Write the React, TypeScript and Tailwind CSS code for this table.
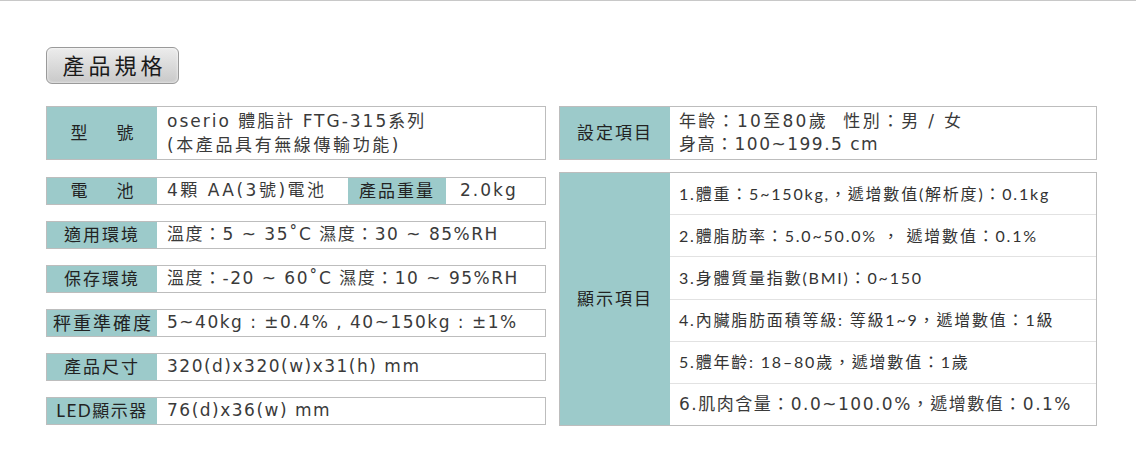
import React from "react";

const font = {
  fontFamily: '"Lato", "Noto Sans CJK TC", sans-serif',
};

const wide = {
  fontFamily: '"DejaVu Sans", "Noto Sans CJK TC", sans-serif',
};

interface RowProps {
  label: React.ReactNode;
  children: React.ReactNode;
  labelClass?: string;
}

const Row: React.FC<RowProps> = ({ label, children, labelClass }) => {
  return (
    <div className="flex h-[28px] border border-[#bdbdbd] bg-white">
      <div
        className={
          "w-[110px] shrink-0 bg-[#9ccaca] flex items-center justify-center text-[#222] " +
          (labelClass ?? "text-[17px] tracking-[2px]")
        }
      >
        {label}
      </div>
      <div
        className="flex-1 flex items-center pl-[10px] text-[17px] tracking-[1.5px] text-[#3a3a3a] whitespace-nowrap"
        style={wide}
      >
        {children}
      </div>
    </div>
  );
};

const Spread: React.FC<{ a: string; b: string }> = ({ a, b }) => (
  <span className="flex gap-[29px] text-[17px]">
    <span>{a}</span>
    <span>{b}</span>
  </span>
);

const displayItems = [
  "1.體重：5~150kg,，遞增數值(解析度)：0.1kg",
  "2.體脂肪率：5.0~50.0% ， 遞增數值：0.1%",
  "3.身體質量指數(BMI)：0~150",
  "4.內臟脂肪面積等級: 等級1~9，遞增數值：1級",
  "5.體年齡:  18–80歲，遞增數值：1歲",
];

export default function App() {
  return (
    <div className="w-[1136px] h-[450px] bg-white" style={font}>
      <div className="h-px bg-[#c8c8c8]" />
      <div className="pl-[46px] pt-[46px]">
        <div className="inline-flex items-center justify-center w-[133px] h-[37px] rounded-[6px] border border-[#9a9a9a] bg-gradient-to-b from-[#ececec] to-[#c9c9c9] shadow-[inset_0_0_3px_rgba(255,255,255,0.9)] text-[22px] tracking-[4px] text-[#1a1a1a] pl-[4px]">
          產品規格
        </div>

        <div className="flex gap-[13px] mt-[22px]">
          {/* left table */}
          <div className="w-[500px] flex flex-col">
            <div className="flex h-[54px] border border-[#bdbdbd] bg-white">
              <div className="w-[110px] shrink-0 bg-[#9ccaca] flex items-center justify-center text-[#222]">
                <Spread a="型" b="號" />
              </div>
              <div
                className="flex-1 flex flex-col justify-center pl-[10px] text-[17px] tracking-[2px] text-[#3a3a3a] leading-[24px] whitespace-nowrap"
                style={wide}
              >
                <div>oserio 體脂計 FTG-315系列</div>
                <div className="tracking-[2.6px]">(本產品具有無線傳輸功能)</div>
              </div>
            </div>

            <div className="flex flex-col gap-[16px] mt-[17px]">
              <div className="flex h-[28px] border border-[#bdbdbd] bg-white">
                <div className="w-[110px] shrink-0 bg-[#9ccaca] flex items-center justify-center text-[#222]">
                  <Spread a="電" b="池" />
                </div>
                <div
                  className="w-[191px] flex items-center pl-[10px] text-[17px] tracking-[2.5px] text-[#3a3a3a] whitespace-nowrap"
                  style={wide}
                >
                  4顆 AA(3號)電池
                </div>
                <div className="w-[98px] bg-[#9ccaca] flex items-center justify-center text-[17px] text-[#222] tracking-[2px]">
                  產品重量
                </div>
                <div
                  className="flex-1 flex items-center pl-[14px] text-[17px] tracking-[2px] text-[#3a3a3a]"
                  style={wide}
                >
                  2.0kg
                </div>
              </div>
              <Row label="適用環境">溫度：5 ~ 35˚C 濕度：30 ~ 85%RH</Row>
              <Row label="保存環境">溫度：-20 ~ 60˚C 濕度：10 ~ 95%RH</Row>
              <Row label="秤重準確度" labelClass="text-[18px] tracking-[2px] pl-[2px]">
                5~40kg : ±0.4% , 40~150kg : ±1%
              </Row>
              <Row label="產品尺寸">320(d)x320(w)x31(h) mm</Row>
              <Row label="LED顯示器" labelClass="text-[17px] tracking-[1.5px]">
                76(d)x36(w) mm
              </Row>
            </div>
          </div>

          {/* right table */}
          <div className="w-[538px] flex flex-col">
            <div className="flex h-[54px] border border-[#bdbdbd] bg-white">
              <div className="w-[110px] shrink-0 bg-[#9ccaca] flex items-center justify-center text-[17px] text-[#222] tracking-[2px]">
                設定項目
              </div>
              <div
                className="flex-1 flex flex-col justify-center pl-[9px] text-[17px] text-[#3a3a3a] leading-[23px] whitespace-nowrap"
                style={wide}
              >
                <div className="tracking-[2.3px]">年齡：10至80歲 &nbsp;性別：男 / 女</div>
                <div className="tracking-[1.5px]">身高：100~199.5 cm</div>
              </div>
            </div>

            <div className="flex h-[254px] border border-[#bdbdbd] bg-white mt-[12px]">
              <div className="w-[110px] shrink-0 bg-[#9ccaca] flex items-center justify-center text-[17px] text-[#222] tracking-[2px]">
                顯示項目
              </div>
              <div className="flex-1 flex flex-col">
                {displayItems.map((item, i) => (
                  <div
                    key={i}
                    className="flex-1 flex items-center pl-[9px] text-[#333] whitespace-nowrap border-b border-[#e2e2e2] text-[16px] tracking-[1.8px]"
                  >
                    {item}
                  </div>
                ))}
                <div
                  className="flex-1 flex items-center pl-[9px] text-[#3a3a3a] whitespace-nowrap text-[17px] tracking-[1.5px]"
                  style={wide}
                >
                  6.肌肉含量：0.0~100.0%，遞增數值：0.1%
                </div>
              </div>
            </div>
          </div>
        </div>
      </div>
    </div>
  );
}
